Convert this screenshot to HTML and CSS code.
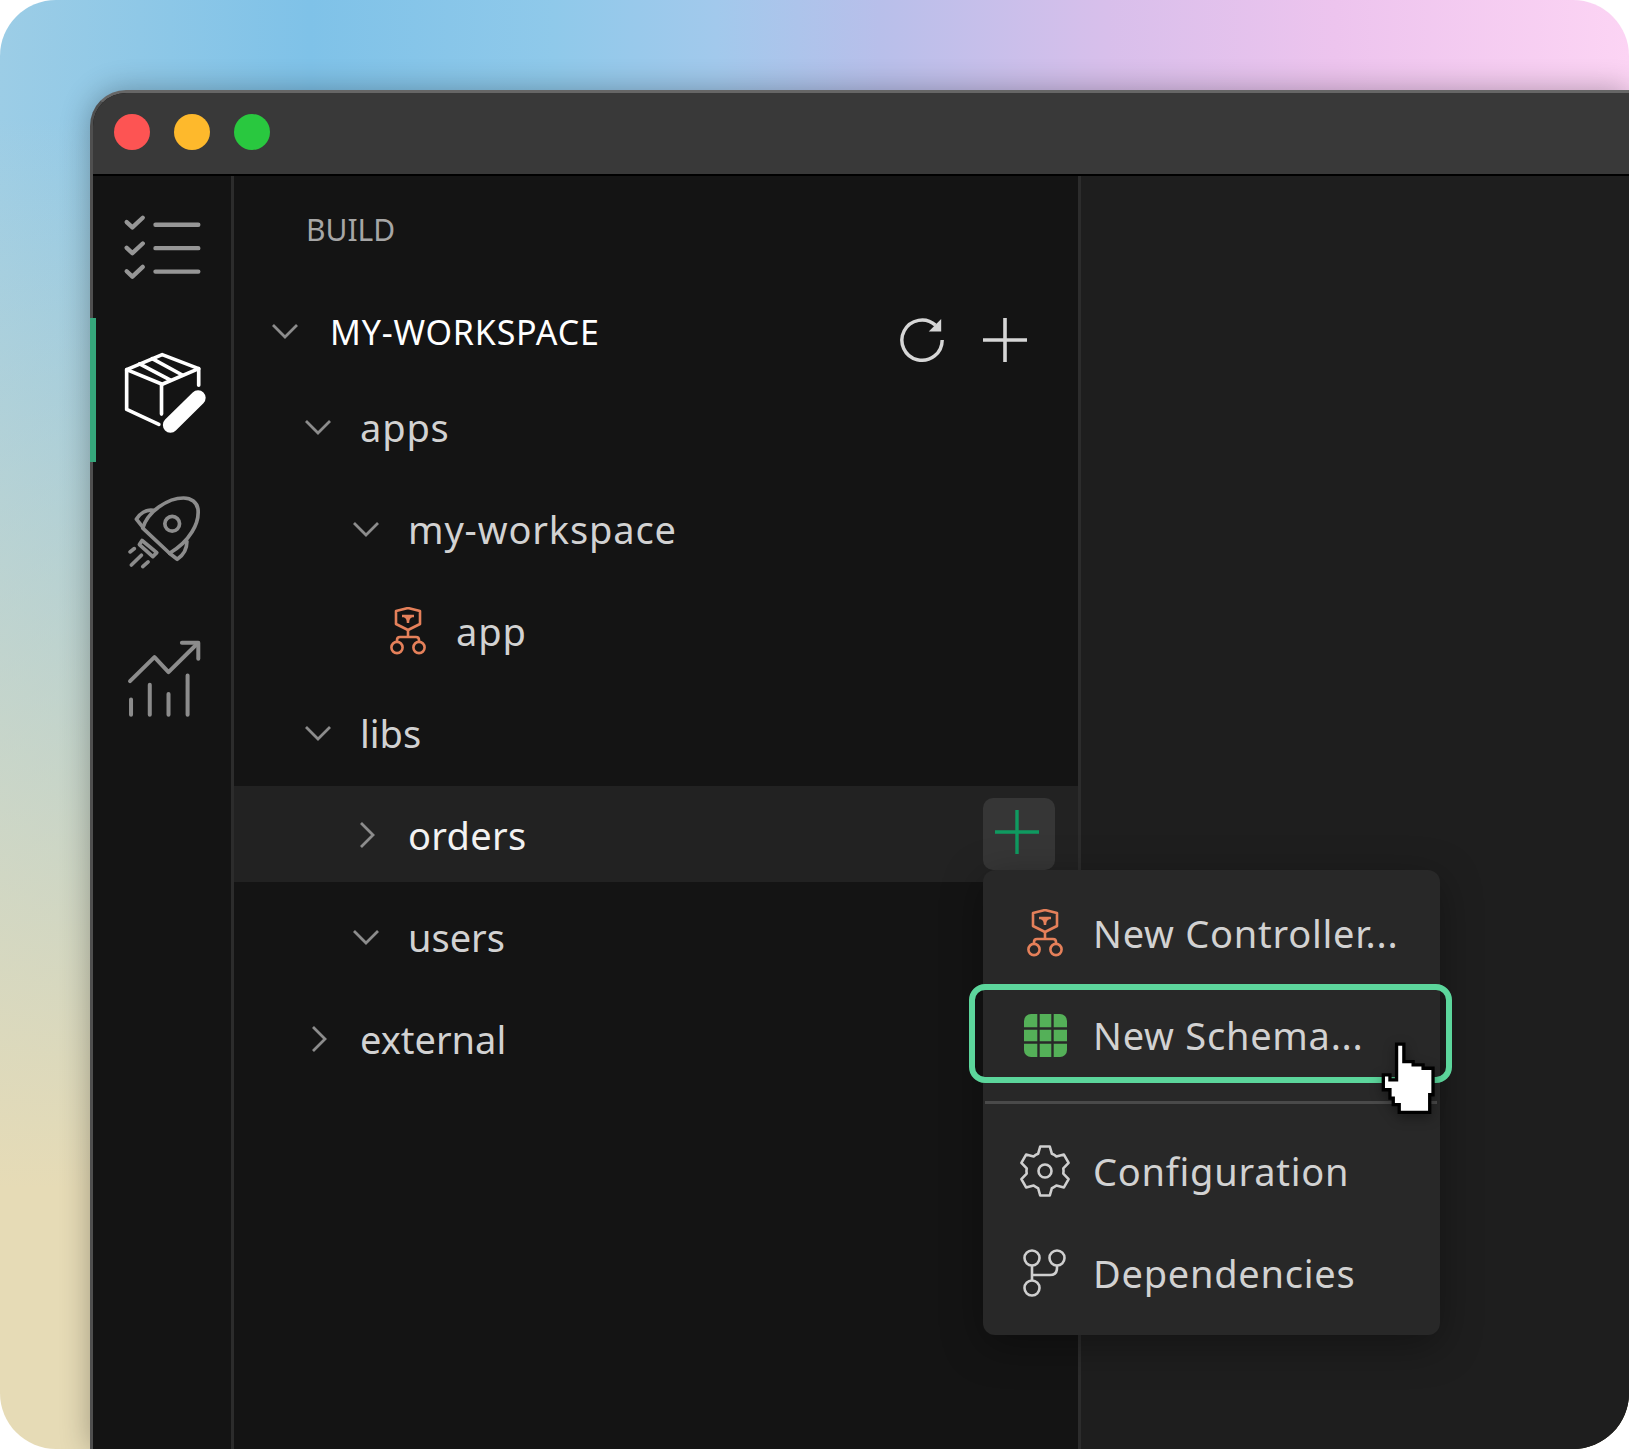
FILE: index.html
```html
<!DOCTYPE html>
<html lang="en">
<head>
<meta charset="utf-8">
<title>Build</title>
<link rel="stylesheet" href="styles.css">
</head>
<body>
<div class="stage">
  <div class="window">
    <header class="titlebar">
      <span class="light red"></span>
      <span class="light yellow"></span>
      <span class="light green"></span>
    </header>
    <div class="body">
      <nav class="rail">
        <svg class="ico-check" viewBox="125 400 245 200"><g fill="none" stroke="#969696" stroke-width="13" stroke-linecap="round" stroke-linejoin="round"><path d="M139 427L156 443L187 414M225 435H353"/><path d="M139 504L156 520L187 491M225 505H353"/><path d="M139 574L156 590L187 561M225 575H353"/></g></svg>
        <svg class="ico-box" viewBox="95 95 260 250"><g fill="none" stroke="#fff" stroke-width="11" stroke-linejoin="round" stroke-linecap="round"><path d="M205 313L108 268V148L215 103L325 145V195"/><path d="M108 148L215 192L325 145"/><path d="M213 192V282"/><path d="M147 131L240 180M185 115L277 165"/></g><path d="M240 315L323 233" stroke="#fff" stroke-width="46" stroke-linecap="round"/></svg>
        <svg class="ico-rocket" viewBox="110 520 230 230"><g fill="none" stroke="#8c8c8c" stroke-width="11" stroke-linecap="round" stroke-linejoin="round"><path d="M160 625C175 575 235 535 282 535C305 535 322 548 325 568C330 610 300 665 240 700Z"/><circle cx="248" cy="612" r="22"/><path d="M192 572C170 568 150 582 141 598L160 622"/><path d="M292 665C292 690 278 708 263 718L240 700"/><path d="M158 662L202 698L190 710L150 674Z"/><path d="M122 696L135 686M126 735L156 706M160 740L176 726"/></g></svg>
        <svg class="ico-chart" viewBox="110 950 230 245"><g fill="none" stroke="#8c8c8c" stroke-width="12" stroke-linecap="round" stroke-linejoin="round"><path d="M122 1082L195 1010L237 1055L325 968"/><path d="M277 967H326V1015"/><path d="M125 1137V1182M181 1093V1182M237 1120V1182M294 1065V1182"/></g></svg>
      </nav>
      <section class="tree">
        <h2 class="tree-title">BUILD</h2>
        <div class="rows">
          <div class="row row-root depth-0">
            <svg class="chev" viewBox="0 0 28 28"><path d="M2 8L14 20L26 8"/></svg>
            <span class="label label-root">MY-WORKSPACE</span>
            <span class="actions">
              <svg class="ico-refresh" viewBox="0 0 48 48"><path class="stroke-light" d="M44 24A21 21 0 1 1 37 8.5"/><path class="fill-light" d="M43 2V15H30Z"/></svg>
              <svg class="ico-plus" viewBox="0 0 44 44"><path class="stroke-light" d="M0 22H44M22 0V44"/></svg>
            </span>
          </div>
          <div class="row depth-1">
            <svg class="chev" viewBox="0 0 28 28"><path d="M2 8L14 20L26 8"/></svg>
            <span class="label label-wide">apps</span>
          </div>
          <div class="row depth-2">
            <svg class="chev" viewBox="0 0 28 28"><path d="M2 8L14 20L26 8"/></svg>
            <span class="label label-wide">my-workspace</span>
          </div>
          <div class="row depth-3">
            <svg class="ico-ctrl" viewBox="0 0 36 48"><g fill="none" stroke="#e5805a" stroke-width="2.6" stroke-linejoin="round"><path d="M6 4L18 1L30 4V17L18 23L6 17Z"/><path d="M18 23V30M7 34V33Q7 30 10 30H26Q29 30 29 33V34"/><circle cx="7" cy="40.5" r="5.6"/><circle cx="29" cy="40.5" r="5.6"/><path d="M12 9H24M14 9Q18 10 18 16M22 9Q18 10 18 16" stroke-width="2.4"/></g></svg>
            <span class="label label-wide">app</span>
          </div>
          <div class="row depth-1">
            <svg class="chev" viewBox="0 0 28 28"><path d="M2 8L14 20L26 8"/></svg>
            <span class="label">libs</span>
          </div>
          <div class="row depth-2 row-hover">
            <svg class="chev" viewBox="0 0 28 28"><path d="M9 2L21 14L9 26"/></svg>
            <span class="label label-hover">orders</span>
            <span class="add-btn"><svg class="ico-plus" viewBox="0 0 44 44"><path class="stroke-green" d="M0 22H44M22 0V44"/></svg></span>
          </div>
          <div class="row depth-2">
            <svg class="chev" viewBox="0 0 28 28"><path d="M2 8L14 20L26 8"/></svg>
            <span class="label">users</span>
          </div>
          <div class="row depth-1">
            <svg class="chev" viewBox="0 0 28 28"><path d="M9 2L21 14L9 26"/></svg>
            <span class="label">external</span>
          </div>
        </div>
      </section>
      <main class="content"></main>
    </div>
  </div>

  <span class="active-bar"></span>

  <div class="menu">
    <div class="menu-item">
      <span class="menu-icon"><svg class="ico-ctrl" viewBox="0 0 36 48"><g fill="none" stroke="#e5805a" stroke-width="2.6" stroke-linejoin="round"><path d="M6 4L18 1L30 4V17L18 23L6 17Z"/><path d="M18 23V30M7 34V33Q7 30 10 30H26Q29 30 29 33V34"/><circle cx="7" cy="40.5" r="5.6"/><circle cx="29" cy="40.5" r="5.6"/><path d="M12 9H24M14 9Q18 10 18 16M22 9Q18 10 18 16" stroke-width="2.4"/></g></svg></span>
      <span>New Controller...</span>
    </div>
    <div class="menu-item menu-item-focus">
      <span class="menu-icon"><svg class="ico-grid" viewBox="0 0 43 43"><rect width="43" height="43" rx="7" fill="#54b058"/><path d="M14.5 0V43M28.5 0V43M0 14.5H43M0 28.5H43" stroke="#282828" stroke-width="2.4"/></svg></span>
      <span>New Schema...</span>
    </div>
    <div class="menu-sep"></div>
    <div class="menu-item">
      <span class="menu-icon"><svg class="ico-gear" viewBox="-26 -27 52 54"><g fill="none" stroke="#cfcfcf" stroke-width="2.6" stroke-linejoin="round"><path d="M-6.9 -17.2L-4.8 -24.5H4.8L6.9 -17.2Q9.5 -16.2 11.4 -14.6L18.9 -16.4L23.6 -8.1L18.3 -2.6Q18.8 0 18.3 2.6L23.6 8.1L18.9 16.4L11.4 14.6Q9.5 16.2 6.9 17.2L4.8 24.5H-4.8L-6.9 17.2Q-9.5 16.2 -11.4 14.6L-18.9 16.4L-23.6 8.1L-18.3 2.6Q-18.8 0 -18.3 -2.6L-23.6 -8.1L-18.9 -16.4L-11.4 -14.6Q-9.5 -16.2 -6.9 -17.2Z"/><circle r="6.5"/></g></svg></span>
      <span>Configuration</span>
    </div>
    <div class="menu-item">
      <span class="menu-icon"><svg class="ico-deps" viewBox="0 0 44 48"><g fill="none" stroke="#cfcfcf" stroke-width="2.6"><circle cx="9" cy="9" r="7.5"/><circle cx="34" cy="9" r="7.5"/><circle cx="9" cy="39" r="7.5"/><path d="M9 16.5V31.5M9 26H27Q34 26 34 19V16.5"/></g></svg></span>
      <span>Dependencies</span>
    </div>
  </div>

  <svg class="cursor" viewBox="120 60 175 235"><path d="M170 72H192V125H220V135H250V145H280V225H270V278H178V255H160V235H150V210H130V165H150V180H170Z" fill="#fff" stroke="#000" stroke-width="10" stroke-linejoin="miter"/></svg>
</div>
</body>
</html>
```
FILE: styles.css
```css
* { box-sizing: border-box; }
html, body { margin: 0; padding: 0; background: #fff; }
body { font-family: "Noto Sans", "Open Sans", sans-serif; }

.stage {
  position: relative;
  width: 1629px;
  height: 1449px;
  overflow: hidden;
  padding: 90px 0 0 90px;
  border-radius: 56px;
  background:
    linear-gradient(180deg, rgba(230,219,182,0) 8%, rgba(230,219,182,1) 82%),
    linear-gradient(90deg, #9ccde6 0%, #7fc2e8 19%, #8fc9ea 34%, #a2c9ec 44%, #b8bfea 54%, #d8bfeb 68%, #edc4ee 82%, #fcd4f4 100%);
}

.window {
  display: flex;
  flex-direction: column;
  height: 1359px;
  border-top: 3px solid #666;
  border-left: 3px solid #4f4f4f;
  border-top-left-radius: 36px;
  overflow: hidden;
  background: #141414;
  box-shadow: 0 0 30px rgba(0,0,0,.3);
}

.titlebar {
  display: flex;
  align-items: center;
  gap: 24px;
  flex: none;
  height: 83px;
  padding: 0 0 3px 21px;
  background: #393939;
  border-bottom: 2px solid #000;
}
.light { width: 36px; height: 36px; border-radius: 50%; }
.red { background: #fd5453; }
.yellow { background: #feb92c; }
.green { background: #29c83f; }

.body { display: flex; flex: 1; min-height: 0; }

.rail {
  flex: none;
  width: 141px;
  padding: 37px 0 0 29px;
  background: #141414;
  border-right: 3px solid #2c2c2c;
}
.rail svg { display: block; }
.ico-check { width: 82px; height: 67px; }
.ico-box { width: 87px; height: 83px; margin-top: 72px; }
.ico-rocket { width: 77px; height: 77px; margin: 58px 0 0 4px; }
.ico-chart { width: 77px; height: 82px; margin: 67px 0 0 4px; }
.active-bar {
  position: absolute;
  left: 90px;
  top: 318px;
  width: 6px;
  height: 144px;
  background: #36a87c;
}

.tree {
  flex: none;
  width: 847px;
  background: #141414;
  border-right: 3px solid #2c2c2c;
}
.tree-title {
  margin: 0;
  height: 104px;
  padding: 37px 0 0 72px;
  font-size: 30px;
  line-height: 34px;
  font-weight: 400;
  color: #a6a6a6;
}
.rows { display: flex; flex-direction: column; gap: 6px; }
.row {
  display: flex;
  align-items: center;
  height: 96px;
  padding-right: 23px;
  font-size: 38px;
  color: #d2d2d2;
}
.row-root { margin-bottom: -4px; padding-top: 6px; }
.depth-0 { padding-left: 37px; }
.depth-1 { padding-left: 70px; }
.depth-2 { padding-left: 118px; }
.depth-3 { padding-left: 156px; }
.chev { flex: none; width: 28px; height: 28px; margin: 2px 28px 0 0; }
.chev path { fill: none; stroke: #8c8c8c; stroke-width: 2.8; }
.depth-0 .chev { margin: 0 31px 0 0; }
.label { padding-top: 2px; line-height: 1; }
.label-wide { letter-spacing: .85px; }
.label-root { color: #fff; font-size: 34px; letter-spacing: .8px; }
.label-hover { color: #f2f2f2; letter-spacing: .3px; }
.row-hover { background: #222; }
.actions {
  display: flex;
  align-items: center;
  gap: 37px;
  margin: 18px 28px 0 auto;
}
.ico-refresh { display: block; width: 46px; height: 46px; }
.ico-plus { display: block; width: 44px; height: 44px; }
.depth-3 .ico-ctrl { flex: none; width: 36px; height: 48px; margin: 2px 30px 0 0; }
.stroke-light { fill: none; stroke: #d6d6d6; stroke-width: 3.6; }
.fill-light { fill: #d6d6d6; }
.stroke-green { fill: none; stroke: #0f9a60; stroke-width: 3.4; }
.add-btn {
  display: flex;
  align-items: center;
  justify-content: center;
  width: 72px;
  height: 72px;
  margin-left: auto;
  padding: 0 4px 4px 0;
  border-radius: 10px;
  background: #363636;
}

.content { flex: 1; background: #1e1e1e; }

.menu {
  position: absolute;
  left: 983px;
  top: 870px;
  width: 457px;
  height: 465px;
  padding-top: 12px;
  border-radius: 12px;
  background: #282828;
  box-shadow: 0 10px 40px rgba(0,0,0,.35);
  font-size: 38px;
  letter-spacing: .75px;
  color: #d2d2d2;
}
.menu-item {
  display: flex;
  align-items: center;
  height: 102px;
  padding-left: 36px;
}
.menu-icon {
  display: flex;
  align-items: center;
  justify-content: center;
  flex: none;
  width: 52px;
  margin-right: 22px;
}
.menu-icon svg { display: block; }
.menu .ico-ctrl { width: 36px; height: 48px; }
.ico-grid { width: 43px; height: 43px; }
.ico-gear { width: 52px; height: 54px; }
.ico-deps { width: 44px; height: 48px; }
.menu-item-focus { position: relative; }
.menu-item-focus::after {
  content: "";
  box-sizing: border-box;
  position: absolute;
  left: -14px;
  top: 0;
  width: 483px;
  height: 99px;
  border: 6px solid #5cd69c;
  border-radius: 16px;
}
.menu-sep {
  height: 3px;
  margin: 15px 3px 16px 2px;
  background: #4a4a4a;
}

.cursor {
  position: absolute;
  left: 1380px;
  top: 1040px;
  width: 58px;
  height: 78px;
  filter: drop-shadow(0 4px 6px rgba(0,0,0,.35));
}
```
